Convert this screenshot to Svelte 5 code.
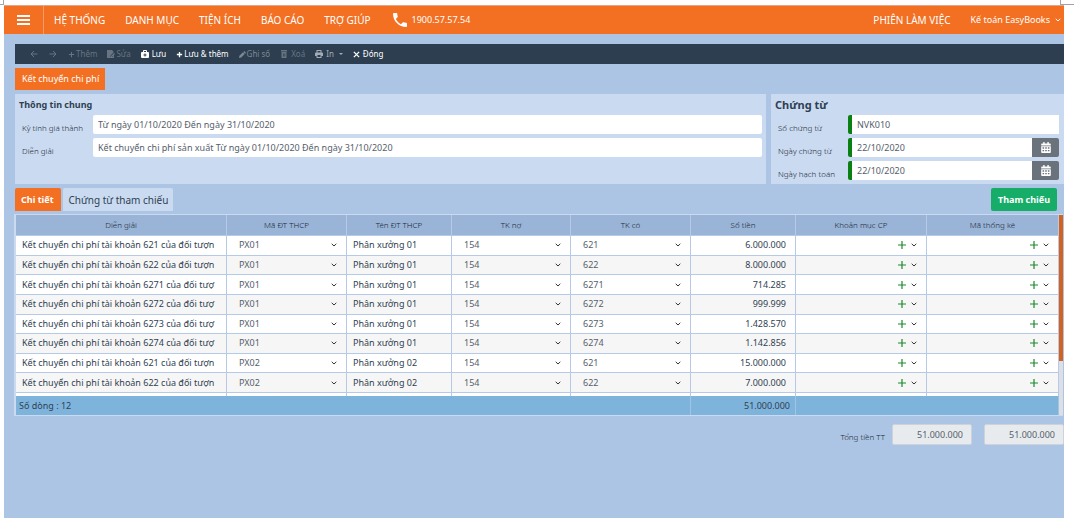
<script>
  const menu = ['HỆ THỐNG', 'DANH MỤC', 'TIỆN ÍCH', 'BÁO CÁO', 'TRỢ GIÚP'];

  const columns = [
    { id: 'desc', label: 'Diễn giải', width: 211 },
    { id: 'code', label: 'Mã ĐT THCP', width: 120 },
    { id: 'name', label: 'Tên ĐT THCP', width: 105 },
    { id: 'debit', label: 'TK nợ', width: 119 },
    { id: 'credit', label: 'TK có', width: 120 },
    { id: 'amount', label: 'Số tiền', width: 105 },
    { id: 'item', label: 'Khoản mục CP', width: 131 },
    { id: 'stat', label: 'Mã thống kê', width: 132 }
  ];
  const total = columns.reduce((sum, c) => sum + c.width, 0);

  const rows = [
    { text: 'Kết chuyển chi phí tài khoản 621 của đối tượn', code: 'PX01', name: 'Phân xưởng 01', credit: '621', amount: '6.000.000' },
    { text: 'Kết chuyển chi phí tài khoản 622 của đối tượn', code: 'PX01', name: 'Phân xưởng 01', credit: '622', amount: '8.000.000' },
    { text: 'Kết chuyển chi phí tài khoản 6271 của đối tượ', code: 'PX01', name: 'Phân xưởng 01', credit: '6271', amount: '714.285' },
    { text: 'Kết chuyển chi phí tài khoản 6272 của đối tượ', code: 'PX01', name: 'Phân xưởng 01', credit: '6272', amount: '999.999' },
    { text: 'Kết chuyển chi phí tài khoản 6273 của đối tượ', code: 'PX01', name: 'Phân xưởng 01', credit: '6273', amount: '1.428.570' },
    { text: 'Kết chuyển chi phí tài khoản 6274 của đối tượ', code: 'PX01', name: 'Phân xưởng 01', credit: '6274', amount: '1.142.856' },
    { text: 'Kết chuyển chi phí tài khoản 621 của đối tượn', code: 'PX02', name: 'Phân xưởng 02', credit: '621', amount: '15.000.000' },
    { text: 'Kết chuyển chi phí tài khoản 622 của đối tượn', code: 'PX02', name: 'Phân xưởng 02', credit: '622', amount: '7.000.000' }
  ];
</script>

{#snippet chevron()}
  <svg class="chev" viewBox="0 0 6 4" aria-hidden="true"><path d="M.7.8 3 3 5.300.8" fill="none" stroke="currentColor" stroke-width="1" /></svg>
{/snippet}

{#snippet calendar()}
  <svg class="cal" viewBox="0 0 448 512" aria-hidden="true"><path fill="currentColor" fill-rule="evenodd" d="M0 464c0 26 22 48 48 48h352c26 0 48-22 48-48V192H0zM64 250h72v60H64zm124 0h72v60h-72zm124 0h72v60h-72zM64 370h72v60H64zm124 0h72v60h-72zm124 0h72v60h-72zM400 64h-48V16c0-9-7-16-16-16h-32c-9 0-16 7-16 16v48H160V16c0-9-7-16-16-16h-32c-9 0-16 7-16 16v48H48C22 64 0 86 0 112v48h448v-48c0-26-22-48-48-48z" /></svg>
{/snippet}

{#snippet picker(value, col)}
  <div class="pick">
    <select aria-labelledby={col}><option>{value}</option></select>
    {@render chevron()}
  </div>
{/snippet}

{#snippet adder(col)}
  <div class="adder">
    <button class="plus" aria-labelledby={col}>
      <svg viewBox="0 0 8 8" aria-hidden="true"><path d="M4 0v8M0 4h8" stroke="currentColor" stroke-width="1.2" /></svg>
    </button>
    <div class="pick mini">
      <select aria-labelledby={col}><option></option></select>
      {@render chevron()}
    </div>
  </div>
{/snippet}

<div class="sheet">
  <div class="marks"><i></i><i></i></div>
  <div class="app">
    <header>
      <button class="burger" aria-label="Menu"><span></span><span></span><span></span></button>
      <nav>
        {#each menu as item}<a href="#top">{item}</a>{/each}
      </nav>
      <a class="phone" href="tel:1900575754">
        <svg viewBox="3 3 18 18" aria-hidden="true"><path fill="currentColor" d="M6.620 10.790c1.440 2.830 3.760 5.140 6.590 6.590l2.200-2.200c.27-.27.67-.36 1.020-.24 1.120.37 2.330.57 3.570.57.55 0 1 .45 1 1V20c0 .55-.45 1-1 1-9.390 0-17-7.610-17-17 0-.55.45-1 1-1h3.500c.55 0 1 .45 1 1 0 1.250.2 2.450.57 3.570.11.35.03.74-.25 1.020l-2.200 2.200z" /></svg>
        <span>1900.57.57.54</span>
      </a>
      <a class="session" href="#top">PHIÊN LÀM VIỆC</a>
      <button class="user">Kế toán EasyBooks {@render chevron()}</button>
    </header>

    <main>
      <div class="toolbar">
        <button class="dim arrow" aria-label="←"><svg viewBox="0 0 8 8"><path d="M7.500 4H1M4 1 1 4l3 3" fill="none" stroke="currentColor" /></svg></button>
        <button class="dim arrow" aria-label="→"><svg viewBox="0 0 8 8"><path d="M.5 4H7M4 1l3 3-3 3" fill="none" stroke="currentColor" /></svg></button>
        <button class="dim"><svg class="s" viewBox="0 0 8 8"><path d="M4 1v6M1 4h6" stroke="currentColor" stroke-width="1.200" /></svg>Thêm</button>
        <button class="dim"><svg viewBox="0 0 8 8"><path d="M0 0h5l1.500 1.500v1L3.500 5.500V7H6V6l1-1v3H0zM4 6l3-3 1 1-3 3H4z" fill="currentColor" /></svg>Sửa</button>
        <button class="gap"><svg viewBox="0 0 8 8"><path fill="currentColor" fill-rule="evenodd" d="M2 2V1q0-1 1-1h2q1 0 1 1v1h1q1 0 1 1v4q0 1-1 1H1q-1 0-1-1V3q0-1 1-1zm1 0h2V1H3zm.5 1.500v1h-1v1h1v1h1v-1h1v-1h-1v-1z" /></svg>Lưu</button>
        <button><svg class="s" viewBox="0 0 8 8"><path d="M4 1v6M1 4h6" stroke="currentColor" stroke-width="1.500" /></svg>Lưu &amp; thêm</button>
        <button class="dim mid"><svg class="s" viewBox="0 0 8 8"><path d="M0 8l.5-2.500 4-4 2 2-4 4zM5 1l1-1 2 2-1 1z" fill="currentColor" /></svg>Ghi số</button>
        <button class="dim gap"><svg viewBox="0 0 8 8"><path fill="currentColor" fill-rule="evenodd" d="M1 0h6v1.500H1zM1.500 2h5v6h-5zM3 3.500v3h.7v-3zm1.500 0v3h.7v-3z" /></svg>Xoá</button>
        <button class="soft gap"><svg viewBox="0 0 8 8"><path fill="currentColor" fill-rule="evenodd" d="M1.500 0h5v2.500H7q1 0 1 1V6H6.500v2h-5V6H0V3.500q0-1 1-1h.5zm1 1v1.500h3V1zm0 4v2h3V5z" /></svg>In <svg class="tri" viewBox="0 0 4 2"><path d="M0 0h4L2 2z" fill="currentColor" /></svg></button>
        <button class="gap"><svg class="s" viewBox="0 0 8 8"><path d="M1 1l6 6M7 1 1 7" stroke="currentColor" stroke-width="1.500" /></svg>Đóng</button>
      </div>

      <h1>Kết chuyển chi phí</h1>

      <div class="panels">
        <section class="general">
          <h2>Thông tin chung</h2>
          <div class="field">
            <label for="period">Kỳ tính giá thành</label>
            <input id="period" value="Từ ngày 01/10/2020 Đến ngày 31/10/2020" />
          </div>
          <div class="field">
            <label for="note">Diễn giải</label>
            <input id="note" value="Kết chuyển chi phí sản xuất Từ ngày 01/10/2020 Đến ngày 31/10/2020" />
          </div>
        </section>
        <section class="voucher">
          <h2>Chứng từ</h2>
          <div class="field">
            <label for="number">Số chứng từ</label>
            <input id="number" value="NVK010" />
          </div>
          <div class="field">
            <label for="vdate">Ngày chứng từ</label>
            <input id="vdate" value="22/10/2020" />
            <button class="date" aria-label="Ngày chứng từ">{@render calendar()}</button>
          </div>
          <div class="field">
            <label for="pdate">Ngày hạch toán</label>
            <input id="pdate" value="22/10/2020" />
            <button class="date" aria-label="Ngày hạch toán">{@render calendar()}</button>
          </div>
        </section>
      </div>

      <div class="tabs">
        <button class="tab active">Chi tiết</button>
        <button class="tab">Chứng từ tham chiếu</button>
        <button class="refer">Tham chiếu</button>
      </div>

      <div class="grid">
        <table>
          <colgroup>
            {#each columns as c}<col style="width: {(c.width / total) * 100}%" />{/each}
          </colgroup>
          <thead>
            <tr>{#each columns as c}<th id={c.id}>{c.label}</th>{/each}</tr>
          </thead>
          <tbody>
            {#each rows as r}
              <tr>
                <td class="text">{r.text}</td>
                <td>{@render picker(r.code, 'code')}</td>
                <td class="text">{r.name}</td>
                <td>{@render picker('154', 'debit')}</td>
                <td>{@render picker(r.credit, 'credit')}</td>
                <td class="num">{r.amount}</td>
                <td>{@render adder('item')}</td>
                <td>{@render adder('stat')}</td>
              </tr>
            {/each}
            <tr class="cut">{#each columns as c}<td></td>{/each}</tr>
          </tbody>
          <tfoot>
            <tr>
              <td class="count" colspan="5">Số dòng : 12</td>
              <td class="num sum">51.000.000</td>
              <td colspan="2"></td>
            </tr>
          </tfoot>
        </table>
        <div class="scroll"><div class="thumb"></div></div>
      </div>

      <div class="totals">
        <label for="total">Tổng tiền TT</label>
        <input id="total" value="51.000.000" readonly />
        <input aria-label="Tổng tiền TT" value="51.000.000" readonly />
      </div>
    </main>
  </div>
</div>

<style>
  :global(body) { background: #fff; }
  .sheet, .sheet * { box-sizing: border-box; }
  .sheet {
    font-family: 'Noto Sans', 'Open Sans', sans-serif;
    font-size: 9px;
    line-height: 12px;
    color: #2f3f52;
    min-height: 100vh;
    padding: 0 10px 4px 4px;
    display: flex;
    flex-direction: column;
  }
  button, input, select { font: inherit; color: inherit; border: 0; margin: 0; padding: 0; background: none; min-width: 0; }
  button { cursor: pointer; white-space: nowrap; }
  a { color: inherit; text-decoration: none; white-space: nowrap; }
  svg { display: block; flex: none; }
  h1, h2 { margin: 0; }

  .marks { display: flex; justify-content: space-between; height: 5px; margin: 0 -10px 0 -4px; }
  .marks i { width: 4px; border: solid #a3a3a3; border-width: 0 1px 1px 0; }
  .marks i:last-child { width: 14px; border-width: 0 0 1px 1px; }

  .app { flex: 1; background: #adc5e4; }
  header {
    display: flex;
    align-items: center;
    height: 29px;
    background: #f36f21;
    border-top: 1px solid #e0a687;
    color: #fff;
    padding-right: 3px;
  }
  .burger { width: 40px; height: 100%; border-right: 1px solid #f79a64; display: flex; flex-direction: column; justify-content: center; gap: 2px; padding-left: 13px; }
  .burger span { width: 13px; height: 2px; background: #fff; }
  nav { display: flex; gap: 20px; padding-left: 10px; font-size: 10px; }
  .phone { display: flex; align-items: center; gap: 5px; margin-left: 22px; }
  .phone svg { width: 14px; height: 14px; }
  .session { margin-left: auto; font-size: 10px; }
  .user { display: flex; align-items: center; gap: 5px; margin-left: 20px; }
  .chev { width: 6px; height: 4px; }

  main { padding: 10px 0 0 11px; }
  .toolbar { display: flex; align-items: center; height: 20px; background: #2c3e50; color: #fff; padding-left: 15px; gap: 10px; font-size: 8px; }
  .toolbar button { display: flex; align-items: center; gap: 1px; }
  .toolbar .gap { gap: 3px; }
  .toolbar .arrow { padding-right: 1px; }
  .toolbar svg { width: 8px; height: 8px; }
  .toolbar .s { width: 7px; height: 7px; }
  .toolbar .tri { width: 4px; height: 2px; margin-left: 2px; }
  .toolbar .dim { color: #687581; }
  .toolbar .mid { color: #7d8994; }
  .toolbar .soft { color: #a3acb4; }

  h1 { width: fit-content; margin-top: 4px; padding: 5px 6px 5px 7px; background: #f36f21; color: #fff; font-size: 9px; line-height: 12px; font-weight: 400; }

  .panels { display: grid; grid-template-columns: 751fr 293fr; gap: 5px; margin-top: 4px; }
  section { background: #cadbf1; height: 90px; padding: 4px 4px 0; }
  .voucher { padding-right: 5px; }
  h2 { font-size: 9px; line-height: 14px; margin-bottom: 3px; font-weight: 700; }
  .voucher h2 { font-size: 11px; }
  .field { display: flex; height: 19px; margin-bottom: 4px; }
  .field label { width: 73px; padding: 6px 0 0 3px; font-size: 8px; font-weight: 300; line-height: 14px; white-space: nowrap; color: #1c2836; }
  .general .field label { width: 74px; }
  .field input { flex: 1; background: #fff; border-radius: 2px; padding: 0 5px; color: #55606b; }
  .voucher .field input { border-left: 4px solid #0a8013; border-radius: 2px 0 0 2px; }
  .date { width: 27px; background: #6a737b; color: #fff; border-radius: 0 2px 2px 0; display: flex; align-items: center; justify-content: center; }
  .cal { width: 10px; height: 11px; }

  .tabs { display: flex; gap: 2px; margin-top: 4px; padding-right: 7px; height: 23px; }
  .tab { background: #cadbf1; padding: 0 5px 0 6px; border-radius: 2px 2px 0 0; font-size: 10px; }
  .tab.active { background: #f36f21; color: #fff; font-weight: 700; font-size: 9px; padding: 0 7px 0 6px; }
  .refer { margin-left: auto; padding: 0 7px; background: #16ad69; color: #fff; font-weight: 700; border-radius: 2px; }

  .grid { display: flex; margin: 3px 1px 0 -1px; border: solid #cadbf1; border-width: 1px 0 1px 2px; }
  table { flex: 1; width: 100%; height: 200px; border-collapse: separate; border-spacing: 0; table-layout: fixed; }
  th, td { padding: 0; border: solid #b4cae6; border-width: 0 1px 1px 0; white-space: nowrap; overflow: hidden; }
  th { height: 21px; background: #99b4d6; font-size: 8px; font-weight: 300; color: #1c2836; }
  tbody tr { background: #fff; }
  tbody tr:nth-child(even) { background: #f6f6f6; }
  .text { padding: 0 6px; }
  .num { text-align: right; padding-right: 9px; }
  .cut td { height: 3px; border-bottom: 0; line-height: 0; }
  tbody .cut { background: #fff; }
  tfoot td { height: 19px; background: #7eb4dc; border-bottom: 0; border-color: #9dc6e6; }
  tfoot .count { padding-left: 3px; }
  tfoot .sum { padding-right: 5px; }
  .pick { display: flex; align-items: center; padding: 0 9px 0 12px; height: 16px; color: #55606b; }
  select { appearance: none; flex: 1; height: 16px; }
  .pick .chev { color: #333; margin-left: -6px; pointer-events: none; }
  .adder { display: flex; align-items: center; justify-content: flex-end; gap: 5px; padding-right: 9px; }
  .adder .mini { padding: 0; }
  .mini select { flex: none; width: 6px; }
  .plus { color: #1c8a2c; }
  .plus svg { width: 8px; height: 8px; }
  .scroll { width: 4px; background: #dcdfe3; }
  .thumb { height: 146px; background: #d4621f; }

  .totals { display: flex; justify-content: flex-end; gap: 12px; margin-top: 8px; }
  .totals label { font-size: 8px; font-weight: 300; line-height: 14px; padding-top: 6px; margin-right: -5px; color: #1c2836; }
  .totals input { width: 80px; height: 21px; background: #e8ebee; border: 1px solid #ccd3da; border-radius: 2px; text-align: right; padding: 0 8px; color: #55606b; }
</style>
